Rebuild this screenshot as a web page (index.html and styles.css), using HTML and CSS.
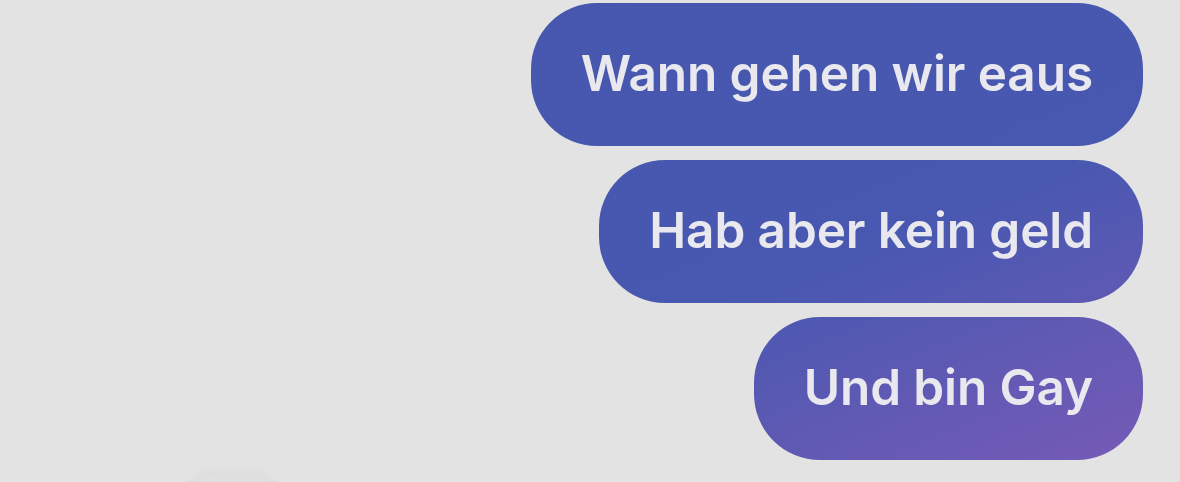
FILE: index.html
```html
<!DOCTYPE html>
<html lang="de">
<head>
<meta charset="UTF-8">
<meta name="viewport" content="width=device-width, initial-scale=1.0">
<title>Chat</title>
<link rel="stylesheet" href="styles.css">
</head>
<body>
<div class="thread">
  <div class="bubble out">Wann gehen wir eaus</div>
  <div class="bubble out">Hab aber kein geld</div>
  <div class="bubble out">Und bin Gay</div>
  <div class="bubble in"></div>
</div>
</body>
</html>
```

FILE: styles.css
```css
html,body{margin:0;height:100%;overflow:hidden;}
body{background:#e3e3e3;font-family:Inter,"Noto Sans",sans-serif;}
.thread{display:flex;flex-direction:column;align-items:flex-end;gap:14px;padding:3px 37px 0 0;}
.bubble{border-radius:66px;font-size:49.5px;font-weight:600;line-height:59px;padding:41px 50px 43px;color:#e8e8ee;letter-spacing:-0.1px;}
.out{background:linear-gradient(to bottom right,#4756ad 0%,#4858b0 62%,#7b5bb8 100%);background-attachment:fixed;}
.in{align-self:flex-start;margin-left:182px;width:100px;height:60px;padding:0;background:#dfdfdf;box-shadow:0 -2px 6px rgba(0,0,0,.04);}
```
